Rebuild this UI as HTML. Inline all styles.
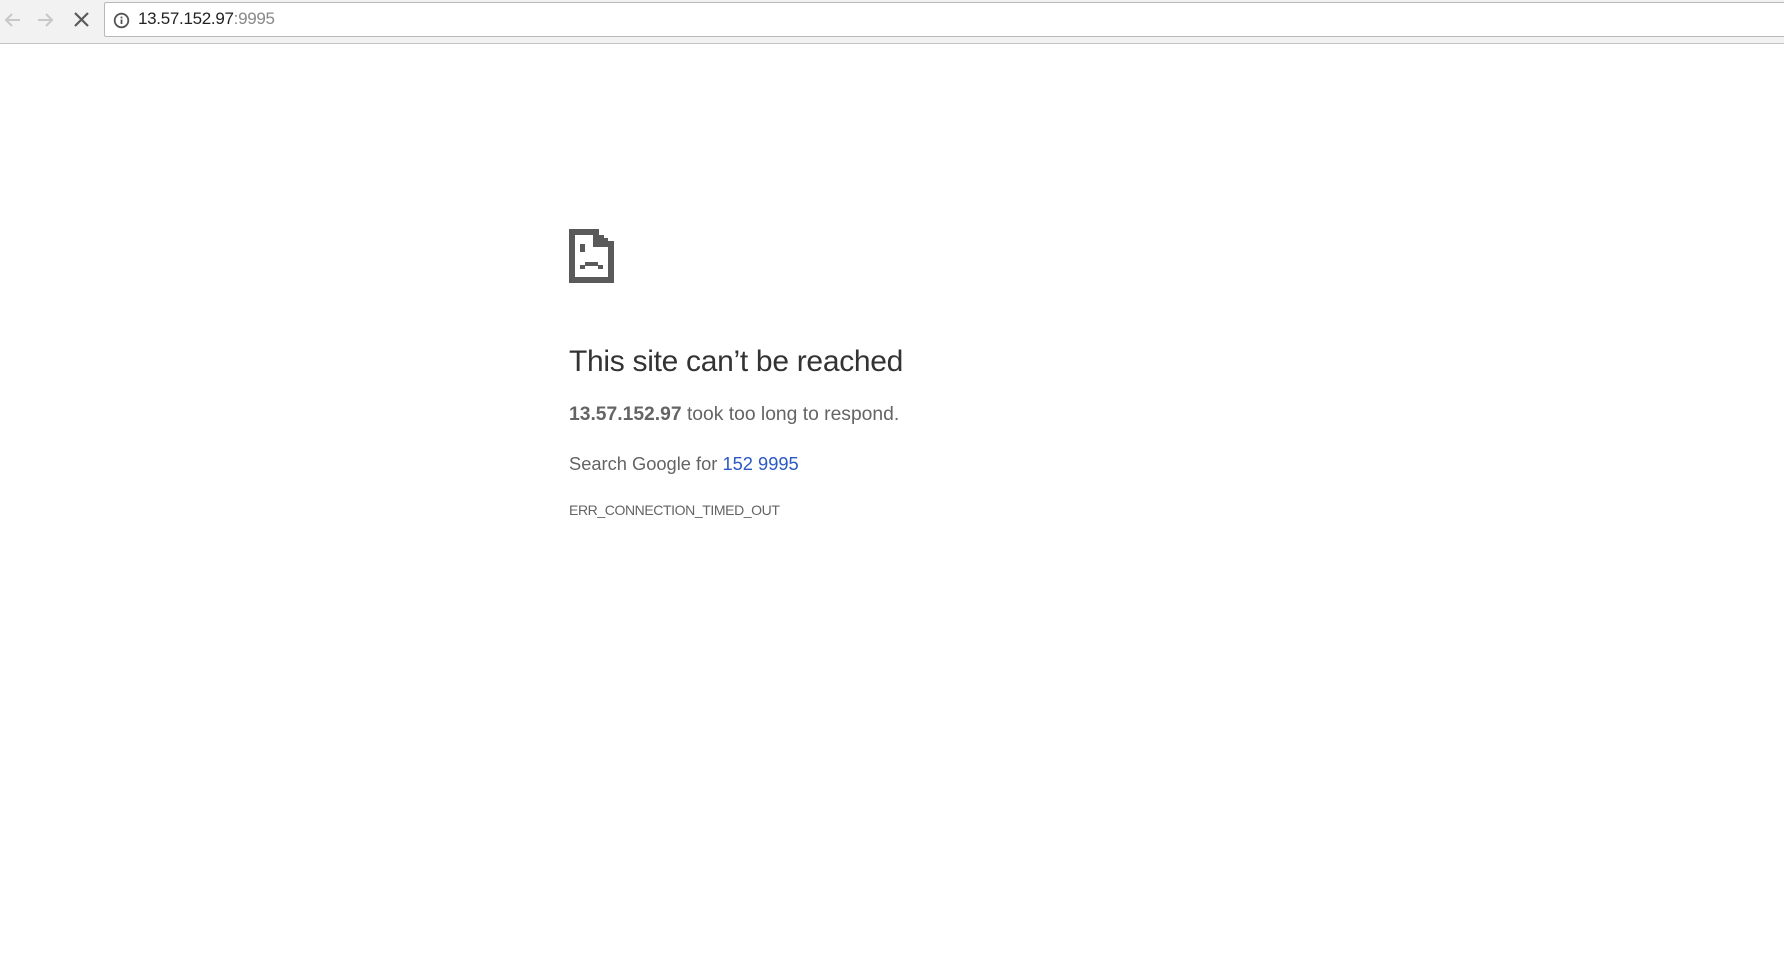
<!DOCTYPE html>
<html><head><style>
body{margin:0;width:1784px;height:975px;background:#fff;position:relative;overflow:hidden;font-family:"Liberation Sans",sans-serif;}
.bar{position:absolute;left:0;top:0;width:1784px;height:43px;background:#f2f2f2;border-bottom:1px solid #c4c4c4;}
.addr{position:absolute;left:104px;top:2px;width:1700px;height:33px;background:#fff;border:1px solid #b9b9b9;border-radius:2px;}
.url{position:absolute;left:138px;top:9px;font-size:17px;color:#222;letter-spacing:-0.3px}
.url span{color:#888}
.t{position:absolute;left:569px;white-space:nowrap;color:#646464}
</style></head><body>
<div class="bar">
<svg style="position:absolute;left:0;top:8px" width="100" height="24" viewBox="0 0 100 24">
<path d="M20 12H6M12 6L6 12L12 18" stroke="#c8c8c8" stroke-width="2" fill="none"/>
<path d="M38 12H52M46 6L52 12L46 18" stroke="#c8c8c8" stroke-width="2" fill="none"/>
<path d="M75 5L88 18M88 5L75 18" stroke="#5a5a5a" stroke-width="2.2" fill="none"/>
</svg>
<div class="addr"></div>
<svg style="position:absolute;left:113px;top:12px" width="17" height="17" viewBox="0 0 17 17">
<circle cx="8.5" cy="8.5" r="6.8" stroke="#555" stroke-width="1.8" fill="none"/>
<rect x="7.6" y="7.5" width="1.8" height="4.5" fill="#555"/><rect x="7.6" y="4.6" width="1.8" height="1.8" fill="#555"/>
</svg>
<div class="url">13.57.152.97<span>:9995</span></div>
</div>
<svg style="position:absolute;left:569px;top:229px" width="45" height="54" viewBox="0 0 45 54">
<rect x="0" y="0" width="6" height="54" fill="#5a5a5a"/>
<rect x="0" y="0" width="30" height="6" fill="#5a5a5a"/>
<rect x="0" y="48" width="45" height="6" fill="#5a5a5a"/>
<rect x="39" y="18" width="6" height="36" fill="#5a5a5a"/>
<rect x="24" y="0" width="6" height="18" fill="#5a5a5a"/>
<rect x="24" y="12" width="21" height="6" fill="#5a5a5a"/>
<rect x="30" y="6" width="5" height="6" fill="#5a5a5a"/>
<rect x="35" y="9" width="4" height="4" fill="#5a5a5a"/>
<rect x="11" y="15" width="5" height="8" fill="#5a5a5a"/>
<rect x="11" y="36" width="5" height="4" fill="#5a5a5a"/>
<rect x="16" y="33" width="13" height="4" fill="#5a5a5a"/>
<rect x="29" y="36" width="5" height="4" fill="#5a5a5a"/>
</svg>
<div class="t" style="top:345px;font-size:30px;color:#333;letter-spacing:-0.3px">This site can’t be reached</div>
<div class="t" style="top:404px;font-size:19.3px;"><b>13.57.152.97</b> took too long to respond.</div>
<div class="t" style="top:453px;font-size:18.3px;">Search Google for <span style="color:#2b59c3">152 9995</span></div>
<div class="t" style="top:502px;font-size:14px;letter-spacing:-0.4px">ERR_CONNECTION_TIMED_OUT</div>
</body></html>
